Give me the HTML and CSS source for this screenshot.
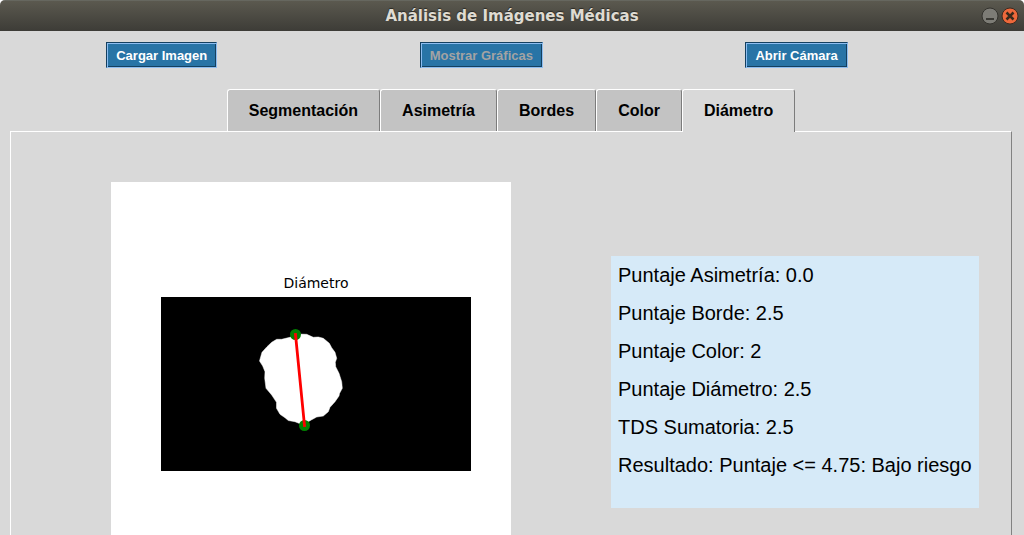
FILE: index.html
```html
<!DOCTYPE html>
<html lang="es">
<head>
<meta charset="utf-8">
<title>Análisis de Imágenes Médicas</title>
<link rel="stylesheet" href="styles.css">
</head>
<body>
<div class="window">
  <header class="titlebar">
    <h1 class="title">Análisis de Imágenes Médicas</h1>
    <div class="controls">
      <button class="control" type="button" aria-label="Minimizar">
        <svg viewBox="0 0 18 18" width="18" height="18"><circle cx="9" cy="9" r="8" fill="#7d7c76" stroke="#33322d"/><path d="M5 12h8" stroke="#3a3934" stroke-width="2"/></svg>
      </button>
      <button class="control" type="button" aria-label="Cerrar">
        <svg viewBox="0 0 18 18" width="18" height="18"><circle cx="9" cy="9" r="8" fill="#ee683b" stroke="#3b2a20"/><path d="M5.500 5.500l7 7M12.500 5.500l-7 7" stroke="#3a2a1c" stroke-width="2.500"/></svg>
      </button>
    </div>
  </header>
  <nav class="toolbar">
    <button class="action" type="button">Cargar Imagen</button>
    <button class="action" type="button" disabled>Mostrar Gráficas</button>
    <button class="action" type="button">Abrir Cámara</button>
  </nav>
  <main class="notebook">
    <div class="tabs" role="tablist">
      <button class="tab" type="button" role="tab" aria-selected="false">Segmentación</button>
      <button class="tab" type="button" role="tab" aria-selected="false">Asimetría</button>
      <button class="tab" type="button" role="tab" aria-selected="false">Bordes</button>
      <button class="tab" type="button" role="tab" aria-selected="false">Color</button>
      <button class="tab tab-active" type="button" role="tab" aria-selected="true">Diámetro</button>
    </div>
    <section class="panel" role="tabpanel">
      <figure class="plot">
        <figcaption class="plot-title">Diámetro</figcaption>
        <svg class="plot-image" viewBox="0 0 310 174" role="img" aria-label="Diámetro de la lesión">
          <rect width="310" height="174" fill="#000"/>
          <path fill="#fff" stroke="#fff" stroke-width=".5" stroke-linejoin="round" d="M135.700 37L129 40.300L120.700 42.300L115.700 42.300L110.700 45.300L106 49.700L101 55.300L99.700 59.700L98.500 64L101.700 69L104 74.700L103.700 81.300L105 91.300L110.700 98L115.500 105.300L115.500 111.300L119 117.300L124 120.700L127.300 123.500L134 124.700L139 126.700L145 126L150.700 122.700L155.700 120L162.300 119L167.300 114.700L169 110.300L174 104.700L178 99L178.500 96.500L181.300 91.300L180.700 84.700L178 76.300L174.700 69.700L174.300 65.300L175.700 61.300L174 55.300L170.700 50.700L168.300 46.300L162.300 41.300L157.300 40L152.300 40.300L145.700 37.300Z"/>
          <circle cx="134.500" cy="37.500" r="5.500" fill="#008000"/>
          <circle cx="143.500" cy="128.500" r="5.500" fill="#008000"/>
          <path d="M134.500 37.500L143.500 128.500" stroke="#f00" stroke-width="2.800" stroke-linecap="square"/>
        </svg>
      </figure>
      <div class="results">
        <p class="result">Puntaje Asimetría: 0.0</p>
        <p class="result">Puntaje Borde: 2.5</p>
        <p class="result">Puntaje Color: 2</p>
        <p class="result">Puntaje Diámetro: 2.5</p>
        <p class="result">TDS Sumatoria: 2.5</p>
        <p class="result">Resultado: Puntaje &lt;= 4.75: Bajo riesgo</p>
      </div>
    </section>
  </main>
</div>
</body>
</html>
```

FILE: styles.css
```css
* {
  box-sizing: border-box;
}

body {
  margin: 0;
  background: #fff;
  color: #000;
  font-family: "Liberation Sans", Arial, sans-serif;
}

.window {
  display: flex;
  flex-direction: column;
  height: 100vh;
  overflow: hidden;
  background: #d9d9d9;
  border-radius: 5px 5px 0 0;
}

.titlebar {
  display: grid;
  grid-template-columns: 1fr auto 1fr;
  align-items: center;
  flex: none;
  height: 31px;
  padding: 0 5px;
  border-top: 1px solid #66675f;
  background: linear-gradient(#5b594f, #3d3c37);
}

.title {
  grid-column: 2;
  margin: 0;
  color: #dfdbd2;
  font: bold 15px/18px "DejaVu Sans", sans-serif;
  text-shadow: 0 -1px 1px #2b2a26;
}

.controls {
  display: flex;
  justify-content: flex-end;
  gap: 2px;
}

.control {
  width: 18px;
  height: 18px;
  padding: 0;
  border: 0;
  background: none;
}

.control svg {
  display: block;
}

.toolbar {
  display: flex;
  justify-content: space-around;
  flex: none;
  padding: 11px 75px 21px 5px;
}

.action {
  height: 26px;
  padding: 2px 9px 0;
  border: 1px solid;
  border-color: #14405f #8dbdf0 #8dbdf0 #14405f;
  box-shadow: inset 1px 1px #8dbdf0, inset -1px -1px #14405f;
  background: #2874a6;
  color: #fff;
  font: bold 13px/18px "Liberation Sans", Arial, sans-serif;
}

.action:disabled {
  color: #a3a3a3;
}

.notebook {
  display: flex;
  flex: 1;
  flex-direction: column;
  min-height: 0;
  padding: 0 12px 0 10px;
}

.tabs {
  display: flex;
  justify-content: center;
  align-items: flex-start;
  flex: none;
  z-index: 1;
}

.tab {
  height: 42px;
  padding: 0 21px;
  border: 1px solid #fff;
  border-right-color: #7c7c7c;
  border-bottom: 0;
  border-radius: 3px 3px 0 0;
  background: #c3c3c3;
  color: #000;
  font: bold 16px/20px "Liberation Sans", Arial, sans-serif;
}

.tab-active {
  height: 43px;
  margin-bottom: -1px;
  background: #d9d9d9;
}

.panel {
  display: flex;
  align-items: center;
  gap: 100px;
  flex: none;
  padding: 50px 32px 50px 100px;
  border: 1px solid #fff;
  border-right-color: #828282;
}

.plot {
  display: flex;
  flex-direction: column;
  flex: none;
  width: 400px;
  height: 400px;
  margin: 0;
  padding: 92px 40px 0 50px;
  background: #fff;
}

.plot-title {
  margin-bottom: 5px;
  font: 14px/18px "DejaVu Sans", sans-serif;
  text-align: center;
}

.plot-image {
  display: block;
  width: 100%;
}

.results {
  flex: 1;
  padding: 0 7px 24px;
  background: #d6eaf8;
}

.result {
  margin: 0;
  font-size: 20px;
  line-height: 38px;
  white-space: nowrap;
}
```
